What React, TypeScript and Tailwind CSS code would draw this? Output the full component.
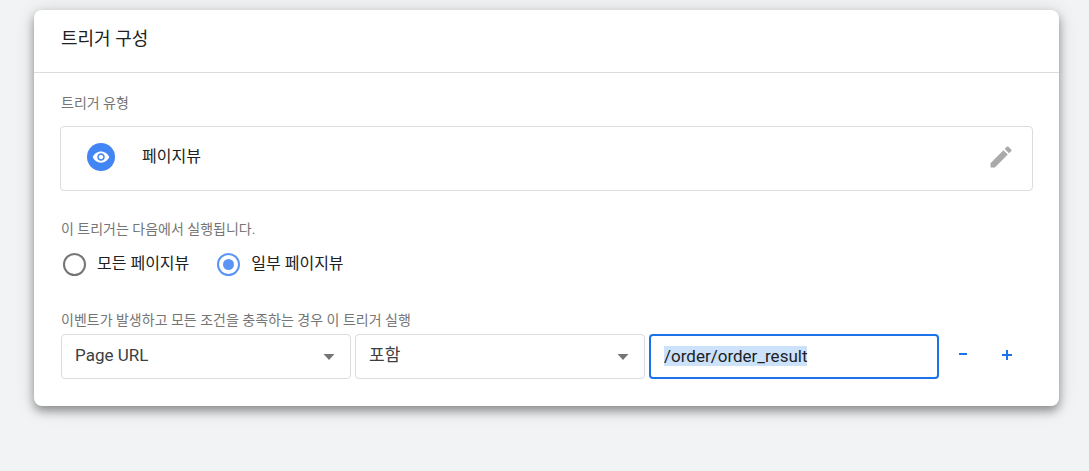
import { useEffect, useRef, useState } from 'react'

interface RadioOptionProps {
  label: string
  value: string
  selected: string
  onSelect: (value: string) => void
}

function RadioOption({ label, value, selected, onSelect }: RadioOptionProps) {
  return (
    <label className="flex cursor-pointer items-center gap-[11px]">
      <input
        type="radio"
        name="fire-on"
        value={value}
        checked={selected === value}
        onChange={() => onSelect(value)}
        className="grid size-[23px] appearance-none place-items-center rounded-full border-2 border-[#757575] before:size-[11px] before:rounded-full checked:border-[#5a95f5] checked:before:bg-[#5a95f5]"
      />
      <span className="text-base leading-6 text-[#212121]">{label}</span>
    </label>
  )
}

interface SelectFieldProps {
  label: string
  options: string[]
}

function SelectField({ label, options }: SelectFieldProps) {
  return (
    <div className="relative min-w-0 flex-1">
      <select
        aria-label={label}
        className="h-[45px] w-full appearance-none rounded border border-[#dadce0] bg-white pr-10 pb-[2px] pl-[13px] text-[17px] text-[#3c4043] outline-none"
      >
        {options.map((option) => (
          <option key={option}>{option}</option>
        ))}
      </select>
      <svg
        viewBox="0 0 12 6"
        className="pointer-events-none absolute top-5 right-4 h-[6px] w-3"
        fill="#757575"
      >
        <path d="M0.5 0h11L6 6z" />
      </svg>
    </div>
  )
}

export default function App() {
  const [fireOn, setFireOn] = useState('some')
  const [value, setValue] = useState('/order/order_result')
  const valueRef = useRef<HTMLInputElement>(null)

  // 조건 값은 바로 수정할 수 있도록 선택된 상태로 시작
  useEffect(() => {
    valueRef.current?.focus()
    valueRef.current?.select()
  }, [])

  return (
    <main className="min-h-screen bg-[#f1f3f4] pt-[10px] pr-[30px] pb-16 pl-[34px] font-['Roboto','Noto_Sans_CJK_KR',sans-serif]">
      <section className="rounded-lg bg-white shadow-[0_5px_10px_rgba(0,0,0,0.36),0_2px_20px_rgba(0,0,0,0.14)]">
        {/* 헤더 */}
        <header className="border-b border-[#dadce0] px-[27px] pt-[15px] pb-[19px]">
          <h1 className="text-lg leading-7 text-[#212121]">트리거 구성</h1>
        </header>

        <div className="px-[26px] pt-5 pb-[27px]">
          {/* 트리거 유형 */}
          <h2 className="px-px text-sm leading-5 text-[#757575]">트리거 유형</h2>
          <div className="mt-[13px] flex h-[65px] items-center rounded border border-[#dadce0] pr-[17px] pb-1 pl-[26px]">
            <div className="flex size-7 items-center justify-center rounded-full bg-[#4285f4]">
              <svg viewBox="0 0 24 24" className="size-[18px]" fill="#fff">
                <path d="M12 4.5C7 4.5 2.73 7.61 1 12c1.73 4.39 6 7.5 11 7.5s9.27-3.11 11-7.5c-1.73-4.39-6-7.5-11-7.5zM12 17c-2.76 0-5-2.24-5-5s2.24-5 5-5 5 2.24 5 5-2.24 5-5 5zm0-8c-1.66 0-3 1.34-3 3s1.34 3 3 3 3-1.34 3-3-1.34-3-3-3z" />
              </svg>
            </div>
            <span className="ml-[27px] flex-1 text-base leading-6 text-[#212121]">페이지뷰</span>
            <button type="button" aria-label="트리거 유형 수정" className="cursor-pointer">
              <svg viewBox="0 0 24 24" className="size-7" fill="#a9a9a9">
                <path d="M3 17.25V21h3.75L17.81 9.94l-3.75-3.75L3 17.25zM20.71 7.04c.39-.39.39-1.02 0-1.41l-2.34-2.34c-.39-.39-1.02-.39-1.41 0l-1.83 1.83 3.75 3.75 1.83-1.83z" />
              </svg>
            </button>
          </div>

          {/* 실행 범위 */}
          <fieldset className="mt-7 px-px">
            <legend className="text-sm leading-5 text-[#757575]">이 트리거는 다음에서 실행됩니다.</legend>
            <div className="mt-[13px] flex gap-7 px-[2px]">
              <RadioOption label="모든 페이지뷰" value="all" selected={fireOn} onSelect={setFireOn} />
              <RadioOption label="일부 페이지뷰" value="some" selected={fireOn} onSelect={setFireOn} />
            </div>
          </fieldset>

          {/* 조건 */}
          <h2 className="mt-[34px] px-px text-sm leading-5 text-[#757575]">
            이벤트가 발생하고 모든 조건을 충족하는 경우 이 트리거 실행
          </h2>
          <div className="mt-1 flex gap-1 pr-[6px] pl-px">
            <SelectField label="변수" options={['Page URL', 'Page Hostname', 'Page Path']} />
            <SelectField label="연산자" options={['포함', '같음', '시작 문자']} />
            <div className="min-w-0 flex-1">
              <input
                ref={valueRef}
                type="text"
                aria-label="값"
                value={value}
                onChange={(e) => setValue(e.target.value)}
                className="block h-[45px] w-full rounded border-2 border-[#1a73e8] bg-white px-[13px] pb-[2px] text-[17px] text-[#202124] outline-none selection:bg-[#cce2fb] selection:text-[#202124]"
              />
            </div>
            <button
              type="button"
              aria-label="조건 삭제"
              className="flex w-10 cursor-pointer items-center justify-center pb-1"
            >
              <svg viewBox="0 0 12 12" className="size-3" fill="#1a73e8">
                <path d="M2 4h8v2H2z" />
              </svg>
            </button>
            <button
              type="button"
              aria-label="조건 추가"
              className="flex w-10 cursor-pointer items-center justify-center pb-1"
            >
              <svg viewBox="0 0 12 12" className="size-3" fill="#1a73e8">
                <path d="M5 1h2v4h4v2H7v4H5V7H1V5h4z" />
              </svg>
            </button>
          </div>
        </div>
      </section>
    </main>
  )
}
